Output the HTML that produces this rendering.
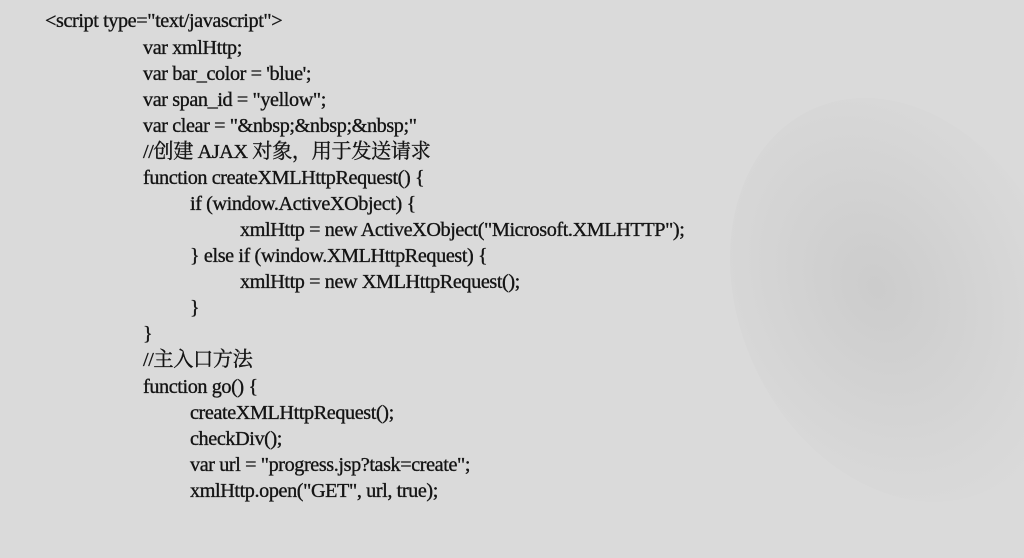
<!DOCTYPE html>
<html><head><meta charset="utf-8"><style>
html,body{margin:0;padding:0}
body{width:1024px;height:508px;overflow:hidden;position:relative;background:#dadada;
font-family:"Liberation Serif","Noto Serif CJK SC",serif;font-size:20.2px;color:#141414;}
.wm{position:absolute;left:740px;top:90px;width:320px;height:420px;border-radius:50%;
background:radial-gradient(ellipse at 45% 45%,rgba(190,190,190,.5),rgba(205,205,205,.25) 55%,rgba(218,218,218,0) 75%);transform:rotate(-25deg)}
.l{position:absolute;white-space:pre;line-height:22px;letter-spacing:-0.4px;-webkit-text-stroke:0.35px #141414}
</style></head><body>
<div class="wm"></div>
<div class="l" style="left:45px;top:10px">&lt;script type="text/javascript"&gt;</div>
<div class="l" style="left:143px;top:37px">var xmlHttp;</div>
<div class="l" style="left:143px;top:63px">var bar_color = 'blue';</div>
<div class="l" style="left:143px;top:89px">var span_id = "yellow";</div>
<div class="l" style="left:143px;top:115px">var clear = "&amp;nbsp;&amp;nbsp;&amp;nbsp;"</div>
<div class="l" style="left:143px;top:141px">//创建 AJAX 对象，用于发送请求</div>
<div class="l" style="left:143px;top:167px">function createXMLHttpRequest() {</div>
<div class="l" style="left:190px;top:193px">if (window.ActiveXObject) {</div>
<div class="l" style="left:240px;top:219px">xmlHttp = new ActiveXObject("Microsoft.XMLHTTP");</div>
<div class="l" style="left:190px;top:245px">} else if (window.XMLHttpRequest) {</div>
<div class="l" style="left:240px;top:271px">xmlHttp = new XMLHttpRequest();</div>
<div class="l" style="left:190px;top:297px">}</div>
<div class="l" style="left:143px;top:323px">}</div>
<div class="l" style="left:143px;top:349px">//主入口方法</div>
<div class="l" style="left:143px;top:376px">function go() {</div>
<div class="l" style="left:190px;top:402px">createXMLHttpRequest();</div>
<div class="l" style="left:190px;top:428px">checkDiv();</div>
<div class="l" style="left:190px;top:454px">var url = "progress.jsp?task=create";</div>
<div class="l" style="left:190px;top:480px">xmlHttp.open("GET", url, true);</div>
</body></html>
